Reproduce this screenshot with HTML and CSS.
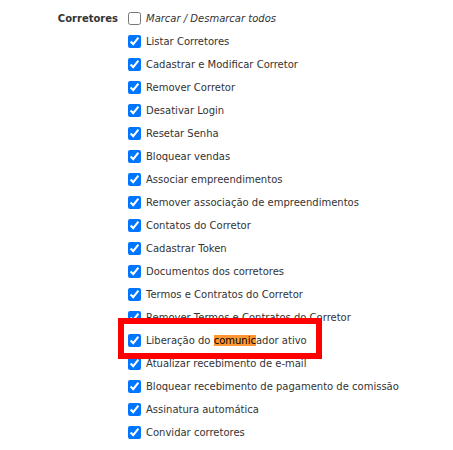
FILE: index.html
```html
<!DOCTYPE html>
<html lang="pt-BR">
<head>
    <meta charset="UTF-8">
    <meta name="viewport" content="width=device-width, initial-scale=1.0">
    <title>Permissões - Corretores</title>
    <link rel="stylesheet" href="styles.css">
</head>
<body>
<div class="page">
    <div class="perm-group">
        <div class="perm-label">Corretores</div>
        <ul class="perm-list">
            <li><label><input type="checkbox"> <em>Marcar / Desmarcar todos</em></label></li>
            <li><label><input type="checkbox" checked> <span>Listar Corretores</span></label></li>
            <li><label><input type="checkbox" checked> <span>Cadastrar e Modificar Corretor</span></label></li>
            <li><label><input type="checkbox" checked> <span>Remover Corretor</span></label></li>
            <li><label><input type="checkbox" checked> <span>Desativar Login</span></label></li>
            <li><label><input type="checkbox" checked> <span>Resetar Senha</span></label></li>
            <li><label><input type="checkbox" checked> <span>Bloquear vendas</span></label></li>
            <li><label><input type="checkbox" checked> <span>Associar empreendimentos</span></label></li>
            <li><label><input type="checkbox" checked> <span>Remover associação de empreendimentos</span></label></li>
            <li><label><input type="checkbox" checked> <span>Contatos do Corretor</span></label></li>
            <li><label><input type="checkbox" checked> <span>Cadastrar Token</span></label></li>
            <li><label><input type="checkbox" checked> <span>Documentos dos corretores</span></label></li>
            <li><label><input type="checkbox" checked> <span>Termos e Contratos do Corretor</span></label></li>
            <li><label><input type="checkbox" checked> <span>Remover Termos e Contratos do Corretor</span></label></li>
            <li class="highlighted">
                <label><input type="checkbox" checked> <span>Liberação do <mark>comunic</mark>ador ativo</span></label>
                <span class="callout"></span>
            </li>
            <li><label><input type="checkbox" checked> <span>Atualizar recebimento de e-mail</span></label></li>
            <li><label><input type="checkbox" checked> <span>Bloquear recebimento de pagamento de comissão</span></label></li>
            <li><label><input type="checkbox" checked> <span>Assinatura automática</span></label></li>
            <li><label><input type="checkbox" checked> <span>Convidar corretores</span></label></li>
        </ul>
    </div>
</div>
</body>
</html>
```

FILE: styles.css
```css
:root {
    --text-color: #333;
    --font-family: 'DejaVu Sans', Verdana, sans-serif;
}
body {
    margin: 0;
    background: #fff;
    font-family: var(--font-family);
    font-size: 10px;
    color: var(--text-color);
}
.page {
    padding-top: 7px;
}
.perm-group {
    display: flex;
    align-items: flex-start;
}
.perm-label {
    width: 118px;
    text-align: right;
    font-weight: bold;
    line-height: 23px;
    flex-shrink: 0;
}
.perm-list {
    list-style: none;
    margin: 0 0 0 10px;
    padding: 0;
}
.perm-list li {
    height: 23px;
    display: flex;
    align-items: center;
}
.perm-list label {
    display: flex;
    align-items: center;
    gap: 5px;
    white-space: nowrap;
}
.perm-list input {
    width: 13px;
    height: 13px;
    margin: 0;
}
.perm-list em {
    font-style: italic;
}
mark {
    background: #ff9632;
    color: #000;
}
.highlighted {
    position: relative;
}
.callout {
    position: absolute;
    left: -10px;
    top: -11px;
    width: 192px;
    height: 29px;
    border: 6px solid #f00;
    pointer-events: none;
}
```
